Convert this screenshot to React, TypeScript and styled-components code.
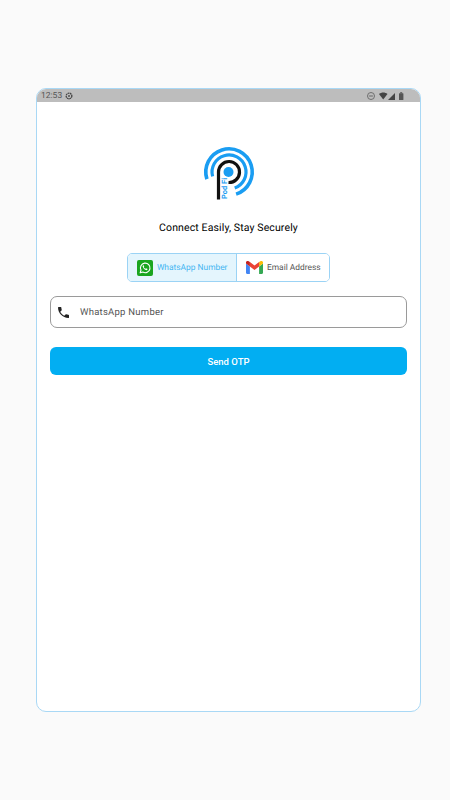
import styled, { createGlobalStyle } from "styled-components"

const GlobalStyle = createGlobalStyle`
    html, body {
        margin: 0;
        padding: 0;
        background: #fafafa;
        font-family: Roboto, "Liberation Sans", sans-serif;
        text-rendering: geometricPrecision;
    }
`

export default function App() {
    return (
        <>
            <GlobalStyle />
            <Page>
                <Card>
                    <StatusBar>
                        <StatusGroup>
                            <Clock>12:53</Clock>
                            <SettingsDot />
                        </StatusGroup>
                        <StatusGroup>
                            <StatusIcons />
                        </StatusGroup>
                    </StatusBar>
                    <Content>
                        <Logo />
                        <Title>Connect Easily, Stay Securely</Title>
                        <Tabs>
                            <Tab $active>
                                <WhatsAppIcon />
                                <span>WhatsApp Number</span>
                            </Tab>
                            <Tab>
                                <GmailIcon />
                                <span>Email Address</span>
                            </Tab>
                        </Tabs>
                        <Field>
                            <PhoneIcon />
                            <FieldLabel>WhatsApp Number</FieldLabel>
                        </Field>
                        <SendButton type="button">Send OTP</SendButton>
                    </Content>
                </Card>
            </Page>
        </>
    )
}

function Logo() {
    return (
        <LogoSvg width="56" height="58" viewBox="0 0 56 58">
            <g fill="none">
                <path d="M5.9 35.1A23.2 23.2 0 1 1 35.1 50.1" stroke="#1a9df2" strokeWidth="3.6" />
                <path d="M11.6 32.4A17 17 0 1 1 33.7 44" stroke="#1a9df2" strokeWidth="3.2" />
                <path d="M17.5 55.5V28A10.5 10.5 0 1 1 27.5 38.5" stroke="#111" strokeWidth="3.2" />
            </g>
            <circle cx="27.5" cy="28" r="5" fill="#1a9df2" />
            <LogoText transform="translate(25.5 55) rotate(-90)">Pod Fi</LogoText>
        </LogoSvg>
    )
}

function SettingsDot() {
    return (
        <svg width="8" height="8" viewBox="0 0 9 9">
            <circle cx="4.5" cy="4.5" r="3.2" fill="none" stroke="#444" strokeWidth="1.5" strokeDasharray="2 .6" />
            <circle cx="4.5" cy="4.5" r="1" fill="#444" />
        </svg>
    )
}

function StatusIcons() {
    return (
        <svg width="38" height="10" viewBox="0 0 38 10">
            <circle cx="4" cy="5" r="3.5" fill="none" stroke="#666" strokeWidth="0.9" />
            <rect x="2.1" y="4.5" width="3.8" height="1" fill="#666" />
            <path d="M12 3C14.5 1 18 1 20.5 3L16.2 8.5Z" fill="#444" />
            <path d="M21 9L28 2V9Z" fill="#444" />
            <rect x="32" y="2.2" width="4.4" height="6.8" rx=".5" fill="#555" />
            <rect x="33.2" y="1.2" width="2" height="1.2" fill="#555" />
        </svg>
    )
}

function WhatsAppIcon() {
    return (
        <svg width="16" height="16" viewBox="0 0 17 17">
            <rect width="17" height="17" rx="2" fill="#1aa51f" />
            <path d="M3.4 13.6l.8-2.9A5.1 5.1 0 1 1 6.2 12.8z" fill="none" stroke="#fff" strokeWidth="1.2" strokeLinejoin="round" />
            <path d="M6.7 5.6c-.5.3-.8.9-.6 1.6.4 1.6 1.7 3 3.3 3.5.8.2 1.4-.1 1.7-.7.1-.3 0-.5-.2-.6l-1-.5c-.2-.1-.4 0-.5.1l-.3.4c-.8-.3-1.5-1-1.9-1.8l.3-.3c.2-.2.2-.3.1-.5l-.4-1c-.1-.2-.3-.3-.5-.2z" fill="#fff" />
        </svg>
    )
}

function GmailIcon() {
    return (
        <svg width="17" height="13" viewBox="0 0 17 13">
            <path d="M0 2.6V11.8C0 12.5.5 13 1.2 13H3.9V5.5Z" fill="#4285f4" />
            <path d="M13.1 5.5V13H15.8C16.5 13 17 12.5 17 11.8V2.6Z" fill="#34a853" />
            <path d="M13.1 1V5.5L17 2.6V1.6C17 .2 15.5-.5 14.4 .3Z" fill="#fbbc04" />
            <path d="M3.9 5.5V1L8.5 4.5L13.1 1V5.5L8.5 9Z" fill="#ea4335" />
            <path d="M0 1.6V2.6L3.9 5.5V1L2.6 .3C1.5-.5 0 .2 0 1.6Z" fill="#c5221f" />
        </svg>
    )
}

function PhoneIcon() {
    return (
        <svg width="11" height="11" viewBox="3 3 18 18">
            <path d="M6.62 10.79c1.44 2.83 3.76 5.14 6.59 6.59l2.2-2.2c.27-.27.67-.36 1.02-.24 1.12.37 2.33.57 3.57.57.55 0 1 .45 1 1V20c0 .55-.45 1-1 1-9.39 0-17-7.61-17-17 0-.55.45-1 1-1h3.5c.55 0 1 .45 1 1 0 1.25.2 2.45.57 3.57.11.35.03.74-.25 1.02l-2.2 2.2z" fill="#222" />
        </svg>
    )
}

const Page = styled.div`
    box-sizing: border-box;
    width: 450px;
    height: 800px;
    padding: 88px 29px 88px 36px;
    background: #fafafa;
`
const Card = styled.main`
    box-sizing: border-box;
    height: 624px;
    border: 1px solid #a9d8f5;
    border-radius: 10px;
    overflow: hidden;
    background: #fff;
`
const StatusBar = styled.div`
    display: flex;
    justify-content: space-between;
    align-items: center;
    height: 13px;
    padding: 0 15px 0 4px;
    background: #bdbdbd;
`
const StatusGroup = styled.div`
    display: flex;
    align-items: center;
    gap: 3px;
`
const Clock = styled.span`
    font-size: 8.5px;
    color: #555;
`
const Content = styled.div`
    display: flex;
    flex-direction: column;
    align-items: center;
    padding: 42px 13px 0;
`
const LogoSvg = styled.svg`
    display: block;
`
const LogoText = styled.text`
    font-size: 7.5px;
    font-weight: 700;
    fill: #1a9df2;
`
const Title = styled.h1`
    margin: 19px 0 0;
    font-size: 10.5px;
    line-height: 14px;
    font-weight: 400;
    letter-spacing: 0.12px;
    color: #000;
`
const Tabs = styled.div`
    display: flex;
    margin-top: 18px;
    height: 29px;
    box-sizing: border-box;
    border: 1px solid #9bd3f5;
    border-radius: 5px;
    overflow: hidden;
`
const Tab = styled.div<{ $active?: boolean }>`
    display: flex;
    align-items: center;
    gap: 4px;
    padding: 0 8.5px 0 9px;
    font-size: 8.4px;
    color: ${p => (p.$active ? "#45b6f2" : "#555")};
    background: ${p => (p.$active ? "#e4f5fd" : "#fff")};
    & + & {
        border-left: 1px solid #9bd3f5;
    }
`
const Field = styled.div`
    box-sizing: border-box;
    align-self: stretch;
    display: flex;
    align-items: center;
    gap: 11px;
    height: 32px;
    margin-top: 14px;
    padding: 0 7px;
    border: 1px solid #9a9a9a;
    border-radius: 7px;
`
const FieldLabel = styled.span`
    font-size: 9.5px;
    letter-spacing: 0.25px;
    color: #555;
`
const SendButton = styled.button`
    align-self: stretch;
    height: 28px;
    margin-top: 19px;
    border: none;
    border-radius: 6px;
    background: #02aef2;
    color: #fff;
    font-family: inherit;
    font-size: 9.5px;
    font-weight: 500;
`
